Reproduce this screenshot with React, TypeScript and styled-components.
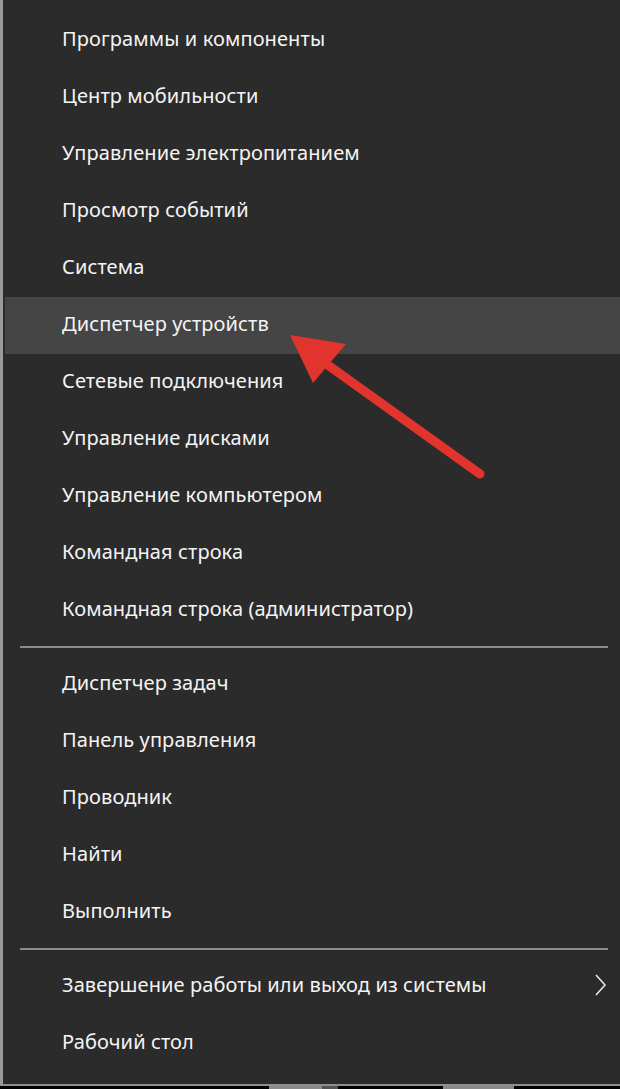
import React from "react";
import styled, { createGlobalStyle } from "styled-components";

const GlobalStyle = createGlobalStyle`
  html, body { margin: 0; padding: 0; background: #000; }
  body { font-family: "Noto Sans", "Open Sans", sans-serif; }
`;

const Page = styled.div`
  position: relative;
  width: 620px;
  height: 1089px;
  overflow: hidden;
  display: flex;
  flex-direction: column;
`;

const Menu = styled.div`
  box-sizing: border-box;
  height: 1086px;
  background: #2b2b2b;
  border-left: 3px solid #9a9a9a;
  border-bottom: 2px solid #8e8e8e;
  padding: 12px 0 0 2px;
  display: flex;
  flex-direction: column;
`;

const Item = styled.div<{ $active?: boolean }>`
  box-sizing: border-box;
  height: 57px;
  display: flex;
  align-items: center;
  justify-content: space-between;
  padding: 0 12px 4px 57px;
  background: ${(p) => (p.$active ? "#454545" : "transparent")};
  color: #f4f4f4;
  font-size: 20px;
  letter-spacing: 0.1px;
  white-space: nowrap;
`;

const Separator = styled.div`
  height: 2px;
  background: #8c8c8c;
  margin: 7px 12px 8px 15px;
`;

const Footer = styled.div`
  height: 3px;
  background: #000;
  display: flex;
`;

const Tab = styled.div<{ $w: number; $ml: number; $c: string }>`
  width: ${(p) => p.$w}px;
  margin-left: ${(p) => p.$ml}px;
  background: ${(p) => p.$c};
`;

const ArrowLayer = styled.svg`
  position: absolute;
  left: 0;
  top: 0;
  pointer-events: none;
`;

const Chevron = () => (
  <svg width="14" height="26" viewBox="0 0 14 26">
    <polyline points="2,3 11,13 2,23" fill="none" stroke="#f1e4e4" strokeWidth="1.6" />
  </svg>
);

const group1 = [
  "Программы и компоненты",
  "Центр мобильности",
  "Управление электропитанием",
  "Просмотр событий",
  "Система",
  "Диспетчер устройств",
  "Сетевые подключения",
  "Управление дисками",
  "Управление компьютером",
  "Командная строка",
  "Командная строка (администратор)",
];

const group2 = ["Диспетчер задач", "Панель управления", "Проводник", "Найти", "Выполнить"];

export default function App() {
  return (
    <>
      <GlobalStyle />
      <Page>
        <Menu>
          {group1.map((t) => (
            <Item key={t} $active={t === "Диспетчер устройств"}>
              <span>{t}</span>
            </Item>
          ))}
          <Separator />
          {group2.map((t) => (
            <Item key={t}>
              <span>{t}</span>
            </Item>
          ))}
          <Separator />
          <Item>
            <span>Завершение работы или выход из системы</span>
            <Chevron />
          </Item>
          <Item>
            <span>Рабочий стол</span>
          </Item>
        </Menu>
        <Footer>
          <Tab $w={53} $ml={269} $c="#8a8a8a" />
          <Tab $w={16} $ml={0} $c="#555" />
          <Tab $w={71} $ml={105} $c="#8a8a8a" />
        </Footer>
        <ArrowLayer width="620" height="1089" viewBox="0 0 620 1089">
          <line x1="480" y1="474" x2="318" y2="358" stroke="#e0342c" strokeWidth="9" strokeLinecap="round" />
          <polygon points="290,335 346,344 313,383" fill="#e0342c" />
        </ArrowLayer>
      </Page>
    </>
  );
}
